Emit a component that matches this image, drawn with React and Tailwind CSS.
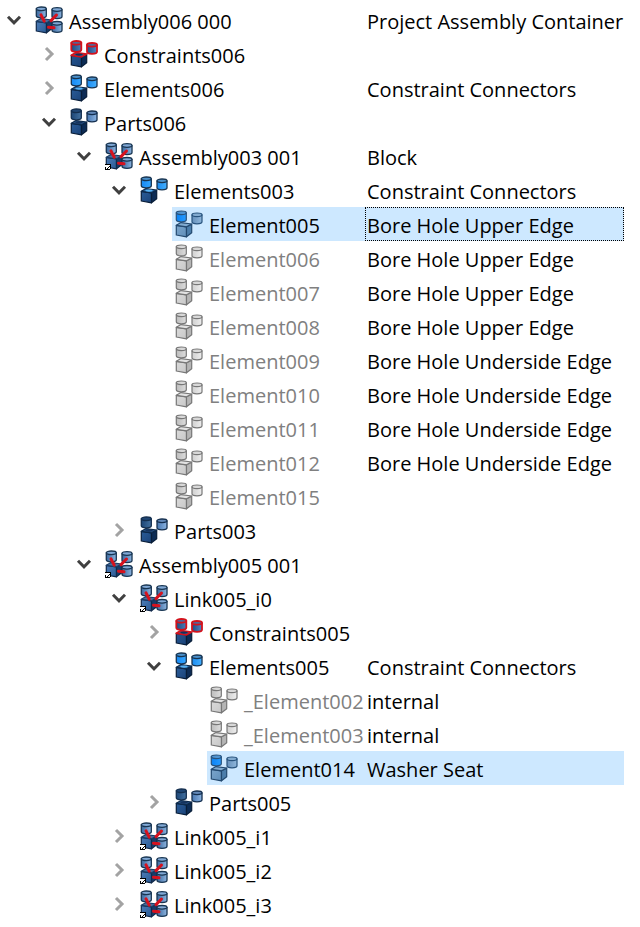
import { useId } from "react";

const ICONS = {
  constraints: { left: ["#1f4b80", "#4a7dba"], right: ["#1f4b80", "#5286c4"], lid: "#4a6ca0", stroke: "#d3121c", line: 1.8, front: "#24558f", frontEnd: "#1b4379", side: "#0d2c55", top: "#3d5f95", edge: "#081d38", topEdge: "#d3121c", socket: "#14305a" },
  elements: { left: ["#1689f4", "#35a6ff"], right: ["#1a8bf0", "#45b0ff"], lid: "#4a8fc9", stroke: "#173451", line: 1.3, front: "#2a5c98", frontEnd: "#1b4379", side: "#0d2c55", top: "#2a6199", edge: "#081d38", topEdge: "#0d2a4b", socket: "#58b4f5" },
  parts: { left: ["#1c4677", "#44719f"], right: ["#4777b2", "#8db5e2"], lid: "#6288b8", leftLid: "#204674", stroke: "#142f4f", line: 1.3, front: "#2a5c98", frontEnd: "#1b4379", side: "#0d2c55", top: "#2a5488", edge: "#081d38", topEdge: "#0d2a4b", socket: "#15335d" },
  selected: { left: ["#0b82f4", "#269bff"], right: ["#6690bb", "#8fb7dc"], lid: "#83abd0", leftLid: "#4f94d2", stroke: "#28537d", line: 1.2, front: "#7ba5cb", frontEnd: "#608fba", side: "#4b7daa", top: "#81abd0", edge: "#23496f", topEdge: "#23496f" },
  muted: { left: ["#bdbdbd", "#dddddd"], right: ["#d0d0d0", "#eeeeee"], lid: "#d8d8d8", stroke: "#777777", line: 1.2, front: "#dadada", frontEnd: "#c8c8c8", side: "#b5b5b5", top: "#e2e2e2", edge: "#777777", topEdge: "#777777" },
  assembly: { left: ["#3b699f", "#8db4df"], right: ["#3b699f", "#8db4df"], lid: "#80a8d5", stroke: "#183552", line: 1.3, front: "#4d7db8", frontEnd: "#2b5a94", side: "#163b69", top: "#4a6f9c", edge: "#10294a", topEdge: "#1b3d65" },
};

function Cylinder({ x, y, fill, lid, stroke, line }) {
  return (
    <g stroke={stroke} strokeWidth={line}>
      <path d={`M${x} ${y + 1.8}v7.2c0 2.7 10 2.7 10 0v-7.2`} fill={fill} />
      <ellipse cx={x + 5} cy={y + 2} rx="5" ry="1.8" fill={lid} />
    </g>
  );
}

function NodeIcon({ kind, linked }) {
  const id = useId();
  const c = ICONS[kind];
  const left = `${id}l`;
  const right = `${id}r`;
  const front = `${id}f`;
  const isAssembly = kind === "assembly";
  const outline = { stroke: c.stroke, line: c.line };
  return (
    <svg viewBox="0 0 28 28" className="size-7 shrink-0" aria-hidden="true">
      <defs>
        <linearGradient id={left}>
          <stop offset="0" stopColor={c.left[0]} />
          <stop offset="1" stopColor={c.left[1]} />
        </linearGradient>
        <linearGradient id={right}>
          <stop offset="0" stopColor={c.right[0]} />
          <stop offset="1" stopColor={c.right[1]} />
        </linearGradient>
        <linearGradient id={front} x1="0" y1="0" x2="1" y2="1">
          <stop offset="0" stopColor={c.front} />
          <stop offset="1" stopColor={c.frontEnd} />
        </linearGradient>
      </defs>
      <Cylinder x={1.3} y={0.8} fill={`url(#${left})`} lid={c.leftLid || c.lid} {...outline} />
      <Cylinder x={17} y={isAssembly ? 1.5 : 2.8} fill={`url(#${right})`} lid={c.lid} {...outline} />
      <g strokeWidth="1.2" strokeLinejoin="round">
        <path d="M1.3 15.3L11.5 16.8v10L1.3 25z" fill={`url(#${front})`} stroke={c.edge} />
        <path d="M11.5 16.8l5.2-2.6v8.6l-5.2 4z" fill={c.side} stroke={c.edge} />
        <path d="M1.3 15.3L6 12.6l10.7 1.4-5.2 2.8z" fill={c.top} stroke={c.topEdge} strokeWidth={kind === "constraints" ? 1.7 : 1.2} />
        {c.socket && <ellipse cx="9" cy="14.6" rx="3.6" ry="1.1" fill={c.socket} />}
      </g>
      {isAssembly && (
        <>
          <Cylinder x={17} y={15.3} fill={`url(#${right})`} lid={c.lid} {...outline} />
          <g stroke="#d6121e" strokeWidth="3" strokeLinecap="round">
            <path d="M6 8.8l3.2 6.4" />
            <path d="M21.5 9L16 14.6" />
            <path d="M13.5 21.2l5.5.6" />
          </g>
        </>
      )}
      {linked && (
        <g shapeRendering="crispEdges">
          <path d="M0 22h6v6H0z" fill="#fff" />
          <path d="M0 22h6v1H0zM5 23h1v4H5zM0 25h1v3H0zM1 27h4v1H1zM2 26h1v-1h1v-1h1v1h-1v1h-1v1H2z" fill="#000" />
        </g>
      )}
    </svg>
  );
}

function Toggle({ open, name }) {
  return (
    <button type="button" aria-expanded={open} aria-label={`Toggle ${name}`} className="flex h-full w-7 items-center justify-center">
      <svg viewBox="0 0 16 16" className="size-4" fill="none" strokeWidth="3" aria-hidden="true">
        {open ? <path d="M2 4.8l6 6 6-6" stroke="#404040" /> : <path d="M5 2l6 6-6 6" stroke="#a3a3a3" />}
      </svg>
    </button>
  );
}

const UPPER = "Bore Hole Upper Edge";
const UNDER = "Bore Hole Underside Edge";

const ROWS = [
  { depth: 0, name: "Assembly006 000", text: "Project Assembly Container", kind: "assembly", open: true },
  { depth: 1, name: "Constraints006", kind: "constraints", open: false },
  { depth: 1, name: "Elements006", text: "Constraint Connectors", kind: "elements", open: false },
  { depth: 1, name: "Parts006", kind: "parts", open: true },
  { depth: 2, name: "Assembly003 001", text: "Block", kind: "assembly", linked: true, open: true },
  { depth: 3, name: "Elements003", text: "Constraint Connectors", kind: "elements", open: true },
  { depth: 4, name: "Element005", text: UPPER, kind: "selected", focused: true },
  { depth: 4, name: "Element006", text: UPPER, kind: "muted" },
  { depth: 4, name: "Element007", text: UPPER, kind: "muted" },
  { depth: 4, name: "Element008", text: UPPER, kind: "muted" },
  { depth: 4, name: "Element009", text: UNDER, kind: "muted" },
  { depth: 4, name: "Element010", text: UNDER, kind: "muted" },
  { depth: 4, name: "Element011", text: UNDER, kind: "muted" },
  { depth: 4, name: "Element012", text: UNDER, kind: "muted" },
  { depth: 4, name: "Element015", kind: "muted" },
  { depth: 3, name: "Parts003", kind: "parts", open: false },
  { depth: 2, name: "Assembly005 001", kind: "assembly", linked: true, open: true },
  { depth: 3, name: "Link005_i0", kind: "assembly", linked: true, open: true },
  { depth: 4, name: "Constraints005", kind: "constraints", open: false },
  { depth: 4, name: "Elements005", text: "Constraint Connectors", kind: "elements", open: true },
  { depth: 5, name: "_Element002", text: "internal", kind: "muted" },
  { depth: 5, name: "_Element003", text: "internal", kind: "muted" },
  { depth: 5, name: "Element014", text: "Washer Seat", kind: "selected" },
  { depth: 4, name: "Parts005", kind: "parts", open: false },
  { depth: 3, name: "Link005_i1", kind: "assembly", linked: true, open: false },
  { depth: 3, name: "Link005_i2", kind: "assembly", linked: true, open: false },
  { depth: 3, name: "Link005_i3", kind: "assembly", linked: true, open: false },
];

const INDENT = ["pl-0", "pl-[35px]", "pl-[70px]", "pl-[105px]", "pl-[140px]", "pl-[175px]"];

function Row({ depth, name, text, kind, linked, open, focused }) {
  const selected = kind === "selected";
  const highlight = selected ? "bg-[#cde8ff]" : "";
  return (
    <tr role="row" aria-level={depth + 1} aria-selected={selected}>
      <td className="p-0">
        <div className={`flex h-[34px] items-center ${INDENT[depth]}`}>
          <div className="h-full w-8 shrink-0">{open !== undefined && <Toggle open={open} name={name} />}</div>
          <div className={`flex h-full min-w-0 grow items-center gap-1.5 pl-[3px] ${highlight}`}>
            <NodeIcon kind={kind} linked={linked} />
            <span className={`pt-1 ${kind === "muted" ? "text-[#808080]" : ""}`}>{name}</span>
          </div>
        </div>
      </td>
      <td className="p-0">
        <div className={`flex h-[34px] items-center border border-dotted pl-px ${highlight} ${focused ? "border-black" : "border-transparent"}`}>
          <span className="pt-1">{text}</span>
        </div>
      </td>
    </tr>
  );
}

export default function App() {
  return (
    <main className="min-h-screen bg-white py-[3px] pr-4 font-['Open_Sans','Noto_Sans',sans-serif] text-[20px] leading-7 text-black">
      <table role="treegrid" aria-label="Assembly tree" className="w-full table-fixed border-collapse whitespace-nowrap">
        <colgroup>
          <col className="w-[365px]" />
          <col />
        </colgroup>
        <tbody>
          {ROWS.map((row) => (
            <Row key={row.name} {...row} />
          ))}
        </tbody>
      </table>
    </main>
  );
}
